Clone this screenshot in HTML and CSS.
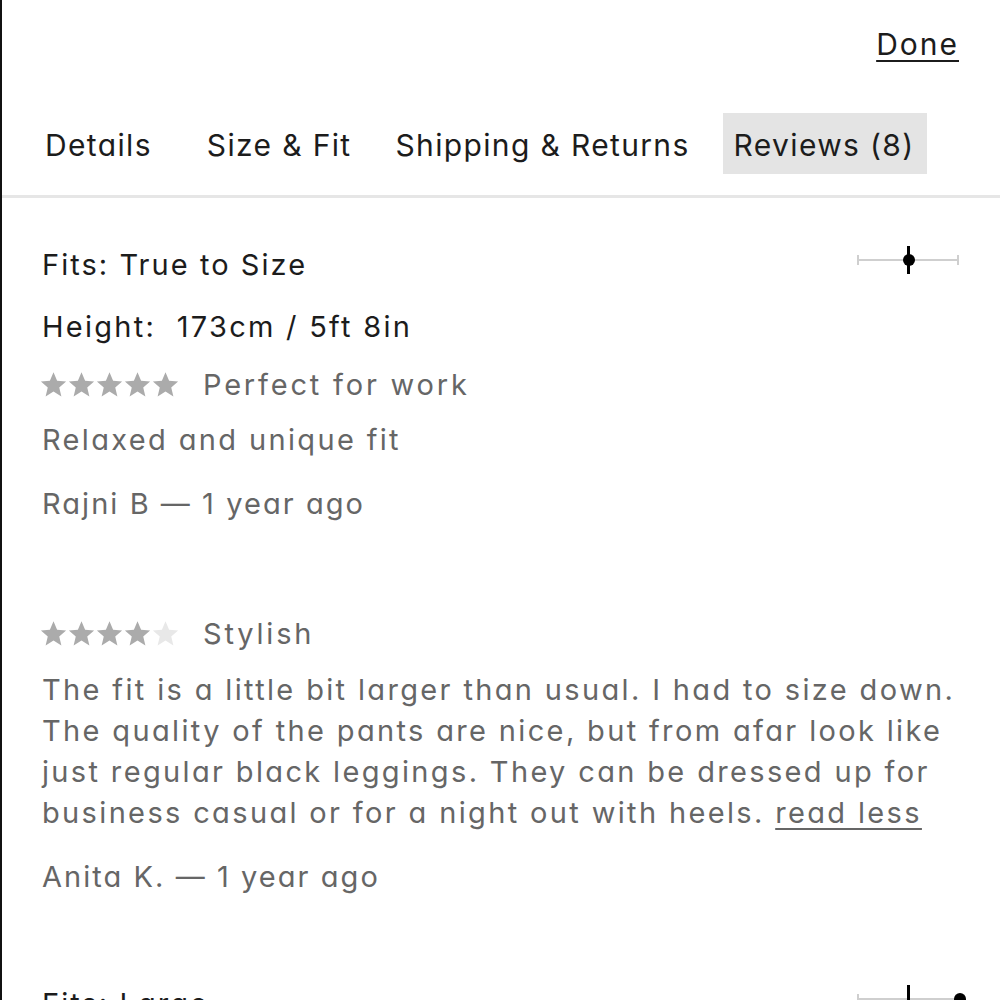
FILE: index.html
```html
<!DOCTYPE html>
<html lang="en">
<head>
<meta charset="utf-8">
<title>Reviews</title>
<link rel="stylesheet" href="styles.css">
</head>
<body>
<div class="frame">
  <div class="done-row"><a class="done" href="#">Done</a></div>
  <nav class="tabs">
    <span class="tab tab-first">Details</span>
    <span class="tab">Size &amp; Fit</span>
    <span class="tab">Shipping &amp; Returns</span>
    <span class="tab active">Reviews (8)</span>
  </nav>
  <div class="reviews">
    <section class="review">
      <div class="fit-row">
        <span class="fit-label">Fits: True to Size</span>
        <span class="fit-scale">
          <span class="fit-line"></span>
          <span class="tick tick-l"></span>
          <span class="tick tick-r"></span>
          <span class="tick-c"></span>
          <span class="fit-dot" style="left:50%"></span>
        </span>
      </div>
      <div class="height-row">Height:&nbsp; 173cm / 5ft 8in</div>
      <div class="rating-row">
        <span class="stars">
          <svg viewBox="0 0 24 24" class="star on"><polygon points="12,1 15.2,8.6 23.2,9.3 17.1,14.6 19,22.6 12,18.3 5,22.6 6.9,14.6 0.8,9.3 8.8,8.6"/></svg>
          <svg viewBox="0 0 24 24" class="star on"><polygon points="12,1 15.2,8.6 23.2,9.3 17.1,14.6 19,22.6 12,18.3 5,22.6 6.9,14.6 0.8,9.3 8.8,8.6"/></svg>
          <svg viewBox="0 0 24 24" class="star on"><polygon points="12,1 15.2,8.6 23.2,9.3 17.1,14.6 19,22.6 12,18.3 5,22.6 6.9,14.6 0.8,9.3 8.8,8.6"/></svg>
          <svg viewBox="0 0 24 24" class="star on"><polygon points="12,1 15.2,8.6 23.2,9.3 17.1,14.6 19,22.6 12,18.3 5,22.6 6.9,14.6 0.8,9.3 8.8,8.6"/></svg>
          <svg viewBox="0 0 24 24" class="star on"><polygon points="12,1 15.2,8.6 23.2,9.3 17.1,14.6 19,22.6 12,18.3 5,22.6 6.9,14.6 0.8,9.3 8.8,8.6"/></svg>
        </span>
        <span class="title">Perfect for work</span>
      </div>
      <p class="body">Relaxed and unique fit</p>
      <div class="author">Rajni B — 1 year ago</div>
    </section>

    <section class="review review-2">
      <div class="rating-row">
        <span class="stars">
          <svg viewBox="0 0 24 24" class="star on"><polygon points="12,1 15.2,8.6 23.2,9.3 17.1,14.6 19,22.6 12,18.3 5,22.6 6.9,14.6 0.8,9.3 8.8,8.6"/></svg>
          <svg viewBox="0 0 24 24" class="star on"><polygon points="12,1 15.2,8.6 23.2,9.3 17.1,14.6 19,22.6 12,18.3 5,22.6 6.9,14.6 0.8,9.3 8.8,8.6"/></svg>
          <svg viewBox="0 0 24 24" class="star on"><polygon points="12,1 15.2,8.6 23.2,9.3 17.1,14.6 19,22.6 12,18.3 5,22.6 6.9,14.6 0.8,9.3 8.8,8.6"/></svg>
          <svg viewBox="0 0 24 24" class="star on"><polygon points="12,1 15.2,8.6 23.2,9.3 17.1,14.6 19,22.6 12,18.3 5,22.6 6.9,14.6 0.8,9.3 8.8,8.6"/></svg>
          <svg viewBox="0 0 24 24" class="star off"><polygon points="12,1 15.2,8.6 23.2,9.3 17.1,14.6 19,22.6 12,18.3 5,22.6 6.9,14.6 0.8,9.3 8.8,8.6"/></svg>
        </span>
        <span class="title">Stylish</span>
      </div>
      <p class="body body-long">The fit is a little bit larger than usual. I had to size down.<br>The quality of the pants are nice, but from afar look like<br>just regular black leggings. They can be dressed up for<br>business casual or for a night out with heels. <a class="read-less" href="#">read less</a></p>
      <div class="author">Anita K. — 1 year ago</div>
    </section>

    <section class="review review-3">
      <div class="fit-row">
        <span class="fit-label">Fits: Large</span>
        <span class="fit-scale">
          <span class="fit-line"></span>
          <span class="tick tick-l"></span>
          <span class="tick tick-r"></span>
          <span class="tick-c"></span>
          <span class="fit-dot" style="left:100%"></span>
        </span>
      </div>
    </section>
  </div>
</div>
</body>
</html>
```

FILE: styles.css
```css
* { box-sizing: border-box; }
html, body { margin: 0; padding: 0; background: #fff; }
body {
  font-family: Inter, "Noto Sans", sans-serif;
  font-feature-settings: "cv11" 1;
  color: #1c1c1c;
}
.frame {
  width: 1000px;
  height: 1000px;
  overflow: hidden;
  border-left: 2px solid #111;
}
.done-row {
  display: flex;
  justify-content: flex-end;
  padding: 24px 42px 0 0;
}
.done {
  font-size: 30px;
  line-height: 40px;
  color: #1c1c1c;
  text-decoration: underline;
  text-underline-offset: 5px;
  text-decoration-thickness: 2px;
  letter-spacing: 2px;
  margin-right: -1px;
}
.tabs {
  display: flex;
  gap: 22px;
  margin-top: 49px;
  padding: 0 0 21px 32px;
  border-bottom: 3px solid #e6e6e6;
}
.tab {
  font-size: 30px;
  line-height: 58px;
  padding: 3px 11px 0;
  letter-spacing: 1.35px;
  color: #1c1c1c;
}
.tab-first { margin-right: 11px; }
.tab.active { background: #e4e4e4; padding-right: 12px; }
.reviews { padding: 0 42px 0 40px; }
.review { display: flex; flex-direction: column; }
.fit-row {
  display: flex;
  justify-content: space-between;
  align-items: center;
  margin-top: 47px;
  height: 40px;
}
.fit-label, .height-row {
  font-size: 29px;
  line-height: 40px;
  letter-spacing: 2.05px;
  color: #1c1c1c;
}
.fit-scale {
  position: relative;
  width: 102px;
  height: 30px;
  margin-top: -10px;
  margin-right: -1px;
}
.fit-line {
  position: absolute;
  left: 0; right: 0; top: 14px;
  height: 2px;
  background: #cfcfcf;
}
.tick {
  position: absolute;
  top: 10px;
  width: 2px;
  height: 10px;
  background: #cfcfcf;
}
.tick-l { left: 0; }
.tick-r { right: 0; }
.tick-c {
  position: absolute;
  left: 50px;
  top: 1px;
  width: 3px;
  height: 28px;
  background: #000;
}
.fit-dot {
  position: absolute;
  top: 9px;
  width: 12px;
  height: 12px;
  margin-left: -5px;
  border-radius: 50%;
  background: #000;
}
.height-row { margin-top: 22px; letter-spacing: 2.25px; }
.rating-row {
  display: flex;
  align-items: center;
  margin-top: 17px;
  height: 40px;
}
.stars { display: flex; gap: 1px; margin-right: 24px; margin-left: -2px; }
.star { width: 27px; height: 27px; display: block; }
.star.on { fill: #ababab; }
.star.off { fill: #e8e8e8; }
.title {
  font-size: 29px;
  letter-spacing: 2.8px;
  color: #666;
}
.body {
  margin: 16px 0 0;
  font-size: 29px;
  line-height: 40px;
  letter-spacing: 2.35px;
  color: #666;
}
.body-long { line-height: 41px; white-space: nowrap; }
.read-less {
  color: #666;
  text-decoration: underline;
  text-underline-offset: 5px;
  text-decoration-thickness: 2px;
}
.author {
  margin-top: 24px;
  font-size: 29px;
  line-height: 40px;
  letter-spacing: 2.05px;
  color: #666;
}
.review-2 { margin-top: 72px; }
.review-3 .fit-row { margin-top: 87px; }
```
